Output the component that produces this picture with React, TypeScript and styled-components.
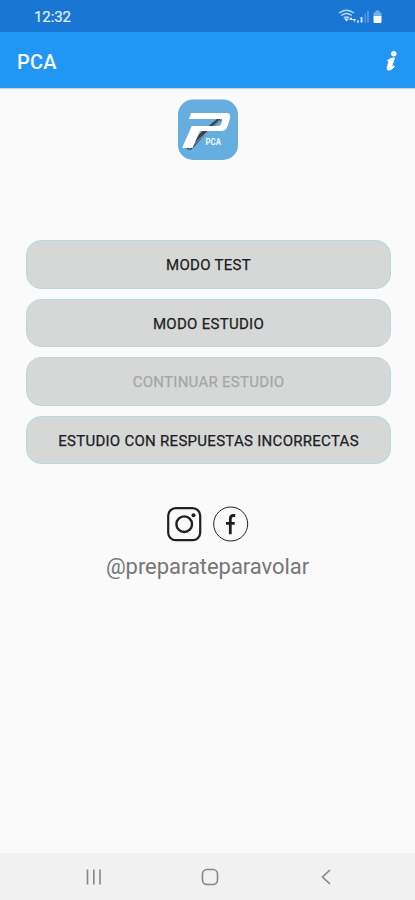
import React from "react";
import styled, { createGlobalStyle } from "styled-components";

const GlobalStyle = createGlobalStyle`
  * { box-sizing: border-box; }
  body { margin: 0; background: #fafafa; }
`;

const Screen = styled.div`
  display: flex;
  flex-direction: column;
  width: 100%;
  height: 100vh;
  overflow: hidden;
  background: #fafafa;
  font-family: Roboto, "Liberation Sans", sans-serif;
`;

const StatusBar = styled.div`
  display: flex;
  flex: none;
  align-items: center;
  justify-content: space-between;
  height: 32px;
  padding: 2px 31px 0 34px;
  background: #1976d2;
`;

const Clock = styled.span`
  color: #e3effa;
  font-size: 15px;
  line-height: 18px;
  letter-spacing: -0.1px;
  -webkit-text-stroke: 0.2px currentColor;
`;

const AppBar = styled.header`
  display: flex;
  flex: none;
  align-items: center;
  justify-content: space-between;
  height: 56px;
  padding: 3px 17px 0 17px;
  background: #2196f3;
  box-shadow: 0 1px 1px rgba(0, 60, 100, 0.2);
`;

const Title = styled.h1`
  margin: 0;
  color: #f4faff;
  font-size: 20px;
  font-weight: 500;
  line-height: 24px;
  letter-spacing: 0.2px;
`;

const InfoButton = styled.button`
  display: flex;
  padding: 0;
  border: 0;
  background: none;
`;

const Content = styled.main`
  display: flex;
  flex: 1;
  flex-direction: column;
  padding: 11px 24px 0 26px;
`;

const Brand = styled.div`
  display: flex;
  justify-content: center;
  padding-right: 1px;
`;

const Logo = styled.svg`
  flex: none;
  width: 62px;
  height: 62px;
`;

const Menu = styled.div`
  display: flex;
  flex-direction: column;
  gap: 10px;
  margin-top: 79px;
`;

const MenuButton = styled.button`
  height: 48.6px;
  padding: 2px 0 0;
  border: 1px solid #b5d9e2;
  border-radius: 15px;
  background: #d6d8d7;
  color: #202020;
  font-family: inherit;
  font-size: 15px;
  font-weight: 400;
  letter-spacing: 0.28px;
  text-transform: uppercase;
  -webkit-text-stroke: 0.25px currentColor;

  &:disabled {
    color: #a5a7a6;
  }
`;

const Footer = styled.footer`
  display: flex;
  flex-direction: column;
  align-items: center;
  margin-top: 42px;
  padding-right: 2px;
`;

const Social = styled.div`
  display: flex;
  gap: 11px;
`;

const SocialIcon = styled.svg`
  width: 36px;
  height: 36px;
`;

const Handle = styled.p`
  margin: 12px 0 0;
  color: #767676;
  font-size: 22px;
  line-height: 26px;
  letter-spacing: -0.05px;
`;

const NavBar = styled.nav`
  display: grid;
  flex: none;
  grid-template-columns: repeat(3, 116px);
  justify-content: center;
  justify-items: center;
  align-items: center;
  height: 47px;
  padding-left: 4px;
  background: #f1f1f1;
`;

const NavIcon = styled.svg`
  width: 20px;
  height: 20px;
  fill: none;
  stroke: #858585;
  stroke-width: 1.6;
`;

const StatusIcons = () => (
  <svg width="46" height="18" viewBox="338 8 46 18">
    <g fill="none" stroke="#b9d7f3" strokeWidth="1.5">
      <path d="M339 13q7.500-5.500 15 0M341.300 15.500q5.200-4 10.400 0M343.700 18q2.800-2.200 5.600 0" />
    </g>
    <path d="M344 18.500h5l-2.500 3zM349 20l2-3 2 3zM352.500 19l2 3 1.500-3z" fill="#d7e8f8" />
    <path d="M357 20.500h2v2h-2zM360.500 17h2v5.500h-2z" fill="#cbe2f7" />
    <path d="M364.500 13.500h1.500v9h-1.500zM367 11h2v11.500h-2z" fill="#4e98df" />
    <path d="M373.500 12.500h2v-2h4v2h2v4h-8z" fill="#75b0e8" />
    <path d="M373.500 16h8v6q0 1-1 1h-6q-1 0-1-1z" fill="#f4faff" />
  </svg>
);

const InfoIcon = () => (
  <svg width="12" height="21" viewBox="386 51 12 21">
    <circle cx="393.800" cy="53.800" r="2.700" fill="#fff" />
    <path
      d="M387.700 60.200q3-2.200 6.800-2.400l-3 9.200q.7.200 2.200-1.300l.8.800q-2.800 3.700-5.600 3.700-2.500-.2-1.700-3l1.900-6.300h-1.600z"
      fill="#fff"
      stroke="#fff"
      strokeWidth="0.9"
    />
  </svg>
);

const BrandLogo = () => (
  <Logo viewBox="177 99 62 62">
    <rect x="178" y="99.500" width="60" height="60.500" rx="15" fill="#67aee0" />
    <path d="M186.500 148l16-17 20-16.500 2.500.5-1.500 3-17 15-15 16.500q-4 1-5-1.500z" fill="#344653" />
    <path d="M189 149l33-31" stroke="#90a9b9" strokeWidth="1" />
    <path
      d="M191 113h35q5.500 0 4 5.500l-2.500 8q-1.500 4.500-6.500 4.500h-21l-7.500 17H182l9.800-22h26.200q2.500 0 3.200-2.200l1-3q.6-1.800-1.400-1.800h-31.800z"
      fill="#fff"
    />
    <text x="205.500" y="145" textLength="15.500" lengthAdjust="spacingAndGlyphs" fill="#eef7fd" fontFamily="Roboto, sans-serif" fontSize="9.500" fontWeight="700">
      PCA
    </text>
  </Logo>
);

const InstagramIcon = () => (
  <SocialIcon viewBox="0 0 36 36" fill="none" stroke="#202020">
    <rect x="2.200" y="2.200" width="32" height="32" rx="7.500" strokeWidth="2.200" />
    <circle cx="18.200" cy="18.200" r="7.800" strokeWidth="2.400" />
    <circle cx="27.500" cy="9.200" r="2" fill="#202020" stroke="none" />
  </SocialIcon>
);

const FacebookIcon = () => (
  <SocialIcon viewBox="0 0 36 36" fill="none" stroke="#202020">
    <circle cx="17.700" cy="18" r="17" strokeWidth="1" />
    <path d="M22.200 9.500h-1.700q-3.200 0-3.200 3.600v15.200M13 17.300h8.700" strokeWidth="2.800" />
  </SocialIcon>
);

export default function App() {
  return (
    <>
      <GlobalStyle />
      <Screen>
        <StatusBar>
          <Clock>12:32</Clock>
          <StatusIcons />
        </StatusBar>
        <AppBar>
          <Title>PCA</Title>
          <InfoButton aria-label="Info">
            <InfoIcon />
          </InfoButton>
        </AppBar>
        <Content>
          <Brand>
            <BrandLogo />
          </Brand>
          <Menu>
            <MenuButton>Modo test</MenuButton>
            <MenuButton>Modo estudio</MenuButton>
            <MenuButton disabled>Continuar estudio</MenuButton>
            <MenuButton>Estudio con respuestas incorrectas</MenuButton>
          </Menu>
          <Footer>
            <Social>
              <InstagramIcon />
              <FacebookIcon />
            </Social>
            <Handle>@preparateparavolar</Handle>
          </Footer>
        </Content>
        <NavBar>
          <NavIcon viewBox="0 0 20 20">
            <path d="M3.500 2.500v15M9.800 2.500v15M16 2.500v15" />
          </NavIcon>
          <NavIcon viewBox="0 0 20 20">
            <rect x="2.500" y="2.500" width="15" height="15" rx="4.500" />
          </NavIcon>
          <NavIcon viewBox="0 0 20 20">
            <path d="M14 3l-7.500 7 7.500 7" />
          </NavIcon>
        </NavBar>
      </Screen>
    </>
  );
}
